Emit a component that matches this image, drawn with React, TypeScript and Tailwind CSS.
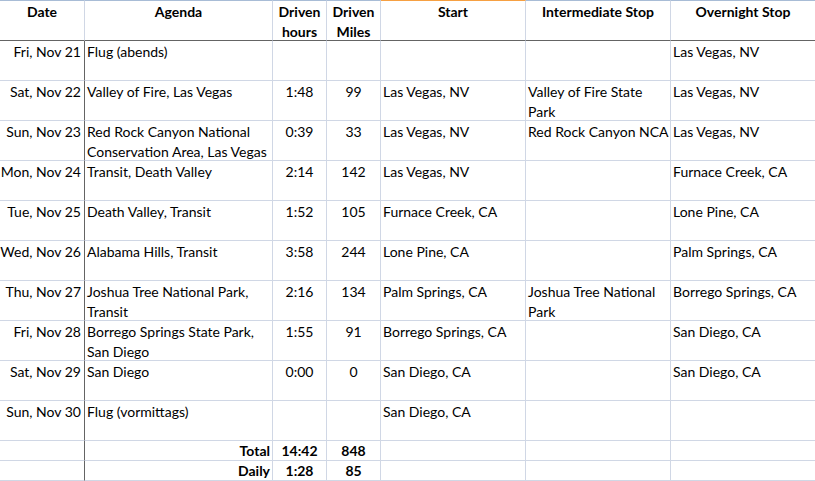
import React from "react";

type Row = {
  date: string;
  agenda: string[];
  hours: string;
  miles: string;
  start: string;
  stop: string[];
  overnight: string;
};

const ROWS: Row[] = [
  { date: "Fri, Nov 21", agenda: ["Flug (abends)"], hours: "", miles: "", start: "", stop: [], overnight: "Las Vegas, NV" },
  { date: "Sat, Nov 22", agenda: ["Valley of Fire, Las Vegas"], hours: "1:48", miles: "99", start: "Las Vegas, NV", stop: ["Valley of Fire State", "Park"], overnight: "Las Vegas, NV" },
  { date: "Sun, Nov 23", agenda: ["Red Rock Canyon National", "Conservation Area, Las Vegas"], hours: "0:39", miles: "33", start: "Las Vegas, NV", stop: ["Red Rock Canyon NCA"], overnight: "Las Vegas, NV" },
  { date: "Mon, Nov 24", agenda: ["Transit, Death Valley"], hours: "2:14", miles: "142", start: "Las Vegas, NV", stop: [], overnight: "Furnace Creek, CA" },
  { date: "Tue, Nov 25", agenda: ["Death Valley, Transit"], hours: "1:52", miles: "105", start: "Furnace Creek, CA", stop: [], overnight: "Lone Pine, CA" },
  { date: "Wed, Nov 26", agenda: ["Alabama Hills, Transit"], hours: "3:58", miles: "244", start: "Lone Pine, CA", stop: [], overnight: "Palm Springs, CA" },
  { date: "Thu, Nov 27", agenda: ["Joshua Tree National Park,", "Transit"], hours: "2:16", miles: "134", start: "Palm Springs, CA", stop: ["Joshua Tree National", "Park"], overnight: "Borrego Springs, CA" },
  { date: "Fri, Nov 28", agenda: ["Borrego Springs State Park,", "San Diego"], hours: "1:55", miles: "91", start: "Borrego Springs, CA", stop: [], overnight: "San Diego, CA" },
  { date: "Sat, Nov 29", agenda: ["San Diego"], hours: "0:00", miles: "0", start: "San Diego, CA", stop: [], overnight: "San Diego, CA" },
  { date: "Sun, Nov 30", agenda: ["Flug (vormittags)"], hours: "", miles: "", start: "San Diego, CA", stop: [], overnight: "" },
];

// grid line colours, Excel 2007 style
const cell = "border-r border-b border-[#d0d7e5] whitespace-nowrap overflow-hidden";
const dateCell = "border-r border-b border-r-[#646464] border-b-[#d0d7e5] whitespace-nowrap overflow-hidden";

function Lines({ lines }: { lines: string[] }) {
  return (
    <>
      {lines.map((l, i) => (
        <div key={i}>{l}</div>
      ))}
    </>
  );
}

export default function App() {
  const head = "border-r border-t border-b border-r-[#d0d7e5] border-t-[#a8bcd6] border-b-[#646464] font-bold text-center h-[41px] pt-px";
  return (
    <div className="w-[815px] h-[481px] overflow-hidden bg-white text-black font-['Lato','Liberation_Sans',sans-serif] text-[14px] leading-[20px]">
      <div className="grid grid-cols-[85px_188px_54px_54px_145px_145px_145px] w-[816px]">
        {/* Kopfzeile */}
        <div className={`${head} border-r-[#646464]`}>Date</div>
        <div className={head}>Agenda</div>
        <div className={head}>
          Driven
          <br />
          hours
        </div>
        <div className={head}>
          Driven
          <br />
          Miles
        </div>
        <div className={`${head} border-t-[#f6a042]`}>Start</div>
        <div className={head}>Intermediate Stop</div>
        <div className={head}>Overnight Stop</div>

        {ROWS.map((r) => (
          <React.Fragment key={r.date}>
            <div className={`${dateCell} h-10 pt-px text-right pr-[3px]`}>{r.date}</div>
            <div className={`${cell} h-10 pt-px pl-[2px]`}>
              <Lines lines={r.agenda} />
            </div>
            <div className={`${cell} h-10 pt-px text-center`}>{r.hours}</div>
            <div className={`${cell} h-10 pt-px text-center`}>{r.miles}</div>
            <div className={`${cell} h-10 pt-px pl-[2px]`}>{r.start}</div>
            <div className={`${cell} h-10 pt-px pl-[2px]`}>
              <Lines lines={r.stop} />
            </div>
            <div className={`${cell} h-10 pt-px pl-[2px]`}>{r.overnight}</div>
          </React.Fragment>
        ))}

        {/* Summen */}
        {[
          ["Total", "14:42", "848"],
          ["Daily", "1:28", "85"],
        ].map(([label, h, m]) => (
          <React.Fragment key={label}>
            <div className={`${dateCell} h-5`} />
            <div className={`${cell} h-5 text-right pr-[2px] font-bold`}>{label}</div>
            <div className={`${cell} h-5 text-center font-bold`}>{h}</div>
            <div className={`${cell} h-5 text-center font-bold`}>{m}</div>
            <div className={`${cell} h-5`} />
            <div className={`${cell} h-5`} />
            <div className={`${cell} h-5`} />
          </React.Fragment>
        ))}
      </div>
    </div>
  );
}
